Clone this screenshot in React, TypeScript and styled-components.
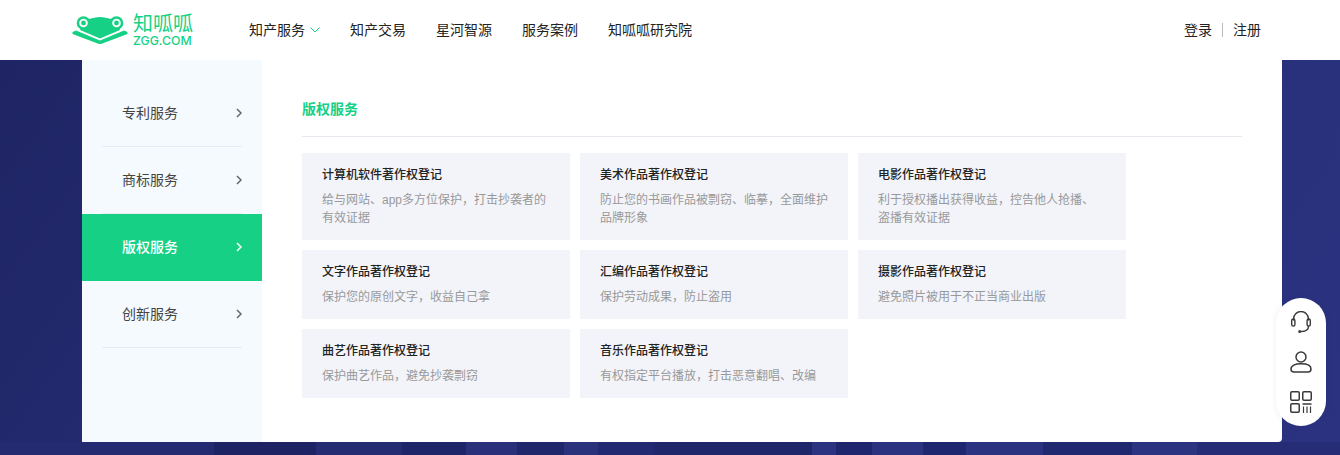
import React from "react";
import styled, { createGlobalStyle } from "styled-components";

const Global = createGlobalStyle`
  html, body { margin: 0; padding: 0; }
  body { font-family: "Liberation Sans", "Noto Sans CJK SC", sans-serif; }
  * { box-sizing: border-box; }
`;
const stripes = [
  [214, "#252b70"], [316, "#1e2364"], [402, "#262c72"], [466, "#1e2568"], [517, "#2a317a"], [564, "#20276b"],
  [598, "#2b327c"], [654, "#222970"], [812, "#20266a"], [836, "#2c3380"], [872, "#1f266e"], [923, "#2b3380"],
  [966, "#1f2670"], [1043, "#2b3380"], [1132, "#20286f"], [1197, "#2c3482"], [1340, "#262d76"],
];
const stripeStops = stripes
  .map(([x, c], i) => `${c} ${i ? stripes[i - 1][0] : 0}px ${x}px`)
  .join(", ");
const Page = styled.div`
  position: relative; width: 1340px; height: 455px; overflow: hidden;
  background:
    linear-gradient(90deg, ${stripeStops}) left bottom / 100% 13px no-repeat,
    linear-gradient(125deg, #1e2463 0%, #252c72 35%, #2b3280 100%);
`;
const Header = styled.header`
  height: 60px; background: #fff; display: flex; align-items: center; padding: 0 79px 0 72px;
`;
const Logo = styled.div`display: flex; align-items: center; gap: 5px; width: 177px; color: #16d185;`;
const LogoText = styled.div`display: flex; flex-direction: column; align-items: flex-start; width: 60px; margin-top: 1px;`;
const LogoCn = styled.span`font-size: 20px; line-height: 20px; font-weight: 400;`;
const LogoEn = styled.span`font-family: Inter, sans-serif; font-size: 12.3px; line-height: 13px; font-weight: 500;`;
const Nav = styled.nav`display: flex; gap: 30px; align-items: center; flex: 1;`;
const NavItem = styled.a`
  font-size: 14px; line-height: 20px; color: #222; display: flex; align-items: center; gap: 5px;
`;
const Auth = styled.div`display: flex; align-items: center; font-size: 14px; line-height: 20px; color: #222;`;
const Sep = styled.i`width: 1px; height: 14px; background: #bbb; margin: 0 10px;`;
const Panel = styled.main`
  width: 1200px; height: 382px; margin-left: 82px; display: flex; background: #fff; border-radius: 0 0 4px 0; overflow: hidden;
`;
const Side = styled.aside`width: 180px; background: #f5faff; padding-top: 20px;`;
const SideItem = styled.div<{ $active?: boolean }>`
  height: 67px; position: relative; display: flex; align-items: center; justify-content: space-between;
  padding: 0 20px 2px 40px; font-size: 14px; line-height: 20px; color: ${p => (p.$active ? "#fff" : "#444")};
  font-weight: ${p => (p.$active ? 500 : 400)};
  background: ${p => (p.$active ? "#16d185" : "transparent")};
  &::after {
    content: ""; position: absolute; left: 20px; right: 20px; bottom: 0; height: 1px;
    background: ${p => (p.$active ? "transparent" : "#e8ebf2")};
  }
`;
const Content = styled.section`flex: 1; padding: 0 40px;`;
const Title = styled.h2`
  margin: 0; height: 77px; padding-top: 38px; font-size: 14px; line-height: 22px; font-weight: 700; color: #16d185;
  border-bottom: 1px solid #e8e9f0;
`;
const Grid = styled.div`display: grid; grid-template-columns: repeat(3, 268px); gap: 10px; margin-top: 16px;`;
const Card = styled.div<{ $tall?: boolean }>`background: #f2f4f9; padding: 12px 20px 0; height: ${p => (p.$tall ? 87 : 69)}px;`;
const CardTitle = styled.h3`margin: 0; font-size: 12px; line-height: 20px; font-weight: 500; color: #222;`;
const CardDesc = styled.p`margin: 6px 0 0; font-size: 12px; line-height: 18px; color: #999; white-space: pre-line;`;
const Float = styled.div`
  position: absolute; left: 1276px; top: 298px; width: 50px; height: 128px; background: #fff; border-radius: 25px;
  box-shadow: 0 0 6px rgba(40,50,120,.08); display: flex; flex-direction: column; align-items: center; padding-top: 13px; gap: 18px;
  color: #3a3a3a;
`;

const Frog = () => (
  <svg width="56" height="30" viewBox="0 0 56 30">
    <path fill="#16d185" d="M17 4 C21 3 24 2 28 2 C32 2 35 3 39 4 C44 8 47 12 48 15 L28 23.500 L8 15 C9 12 12 8 17 4 Z" />
    <circle cx="11.500" cy="8" r="6.800" fill="#16d185" />
    <circle cx="44.500" cy="8" r="6.800" fill="#16d185" />
    <circle cx="11.500" cy="8" r="4.300" fill="#fff" />
    <circle cx="44.500" cy="8" r="4.300" fill="#fff" />
    <circle cx="11.500" cy="8" r="2.400" fill="#16d185" />
    <circle cx="44.500" cy="8" r="2.400" fill="#16d185" />
    <path fill="#16d185" d="M0.500 17 L4 15.500 L28 25.500 L52 15.500 L55.500 17 L55.500 19 L29 29 L27 29 L0.500 19 Z" />
  </svg>
);
const Down = () => (
  <svg width="10" height="6" viewBox="0 0 10 6" fill="none" stroke="#16d185" strokeWidth="1"><path d="M.5.5 5 5 9.500.5" /></svg>
);
const Right = ({ c }: { c: string }) => (
  <svg width="6" height="10" viewBox="0 0 6 10" fill="none" stroke={c} strokeWidth="1.500"><path d="M1 1l4 4-4 4" /></svg>
);
const Headset = () => (
  <svg width="22" height="22" viewBox="0 0 22 22" fill="none" stroke="currentColor" strokeWidth="1.400" strokeLinecap="round">
    <path d="M3.500 9V8a7.500 7.500 0 0 1 15 0v1" />
    <rect x="1.700" y="8" width="3.200" height="7" rx="1.600" />
    <rect x="17.100" y="8" width="3.200" height="7" rx="1.600" />
    <path d="M18.500 15.500c0 3-2.500 4.800-7 5" />
    <circle cx="9.700" cy="20.500" r=".8" />
  </svg>
);
const User = () => (
  <svg width="22" height="22" viewBox="0 0 22 22" fill="none" stroke="currentColor" strokeWidth="1.500">
    <circle cx="11" cy="6" r="5" />
    <path d="M1 18c0-3.200 4-5.200 10-5.200s10 2 10 5.200c0 2-1 3-3 3H4c-2 0-3-1-3-3Z" />
  </svg>
);
const Qr = () => (
  <svg width="22" height="22" viewBox="0 0 22 22" fill="none" stroke="currentColor" strokeWidth="1.500">
    <rect x=".75" y=".75" width="8.500" height="8.500" rx="1.200" />
    <rect x="12.750" y=".75" width="8.500" height="8.500" rx="1.200" />
    <rect x=".75" y="12.750" width="8.500" height="8.500" rx="1.200" />
    <path d="M12.500 13h9" />
    <path d="M13.500 15.500V22M17 15.500V22M20.500 15.500V22" strokeWidth="1.200" />
  </svg>
);

const side = ["专利服务", "商标服务", "版权服务", "创新服务"];
const cards: [string, string, boolean][] = [
  ["计算机软件著作权登记", "给与网站、app多方位保护，打击抄袭者的有效证据", true],
  ["美术作品著作权登记", "防止您的书画作品被剽窃、临摹，全面维护品牌形象", true],
  ["电影作品著作权登记", "利于授权播出获得收益，控告他人抢播、\n盗播有效证据", true],
  ["文字作品著作权登记", "保护您的原创文字，收益自己拿", false],
  ["汇编作品著作权登记", "保护劳动成果，防止盗用", false],
  ["摄影作品著作权登记", "避免照片被用于不正当商业出版", false],
  ["曲艺作品著作权登记", "保护曲艺作品，避免抄袭剽窃", false],
  ["音乐作品著作权登记", "有权指定平台播放，打击恶意翻唱、改编", false],
];

export default function App() {
  return (
    <Page>
      <Global />
      <Header>
        <Logo>
          <Frog />
          <LogoText><LogoCn>知呱呱</LogoCn><LogoEn>ZGG.COM</LogoEn></LogoText>
        </Logo>
        <Nav>
          <NavItem>知产服务 <Down /></NavItem>
          <NavItem>知产交易</NavItem>
          <NavItem>星河智源</NavItem>
          <NavItem>服务案例</NavItem>
          <NavItem>知呱呱研究院</NavItem>
        </Nav>
        <Auth>登录<Sep />注册</Auth>
      </Header>
      <Panel>
        <Side>
          {side.map((s, i) => (
            <SideItem key={s} $active={i === 2}>{s}<Right c={i === 2 ? "#fff" : "#666"} /></SideItem>
          ))}
        </Side>
        <Content>
          <Title>版权服务</Title>
          <Grid>
            {cards.map(([t, d, tall]) => (
              <Card key={t} $tall={tall}>
                <CardTitle>{t}</CardTitle>
                <CardDesc>{d}</CardDesc>
              </Card>
            ))}
          </Grid>
        </Content>
      </Panel>
      <Float><Headset /><User /><Qr /></Float>
    </Page>
  );
}
